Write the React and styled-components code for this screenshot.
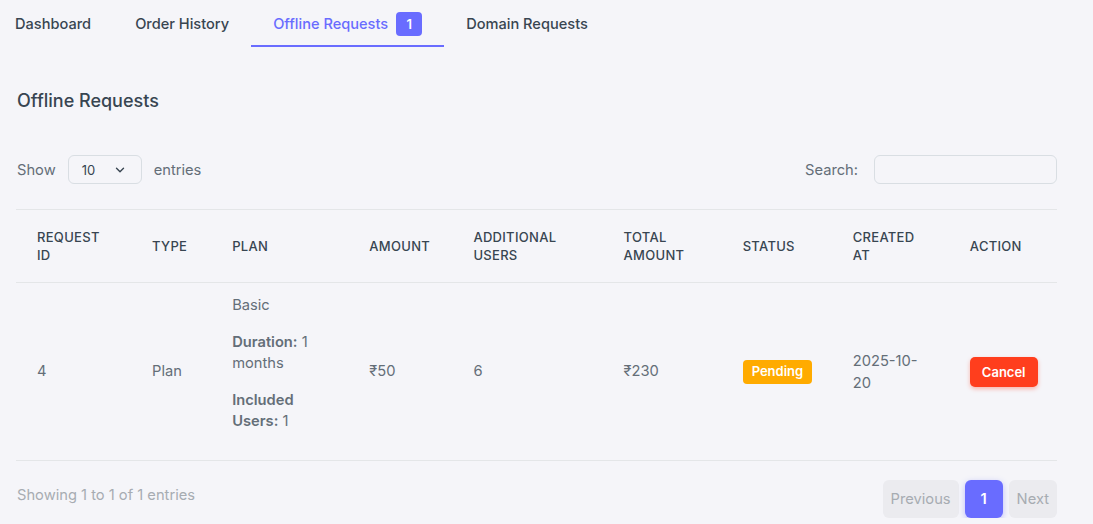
import React from "react";
import styled, { createGlobalStyle } from "styled-components";

const GlobalStyle = createGlobalStyle`
  body {
    margin: 0;
    background: #f5f5f9;
    font-family: Inter, "Noto Sans", "Liberation Sans", sans-serif;
    color: #646e78;
  }
`;

const Page = styled.div`
  padding: 0 36px 0 16px;
`;

const TabBar = styled.nav`
  display: flex;
  margin-left: -23px;
  height: 47px;
`;

const Tab = styled.a`
  display: flex;
  align-items: center;
  gap: 8px;
  box-sizing: border-box;
  height: 47px;
  padding: 3px 22px 0;
  font-size: 14.6px;
  font-weight: 500;
  color: ${(p) => (p.active ? "#696cff" : "#384551")};
  border-bottom: 2px solid ${(p) => (p.active ? "#696cff" : "transparent")};
  text-decoration: none;
  cursor: pointer;
`;

const TabBadge = styled.span`
  display: inline-flex;
  align-items: center;
  justify-content: center;
  width: 26px;
  height: 24px;
  border-radius: 4px;
  background: #696cff;
  color: #fff;
  font-size: 13px;
  font-weight: 600;
  margin-bottom: 1px;
`;

const Title = styled.h5`
  margin: 42px 0 0 1px;
  font-size: 18px;
  line-height: 24px;
  font-weight: 500;
  color: #384551;
`;

const Controls = styled.div`
  display: flex;
  justify-content: space-between;
  align-items: center;
  margin-top: 42px;
  font-size: 14.7px;
  color: #646e78;
`;

const Group = styled.label`
  display: flex;
  align-items: center;
  gap: ${(p) => p.gap || 12}px;
  margin-left: ${(p) => p.offset || 0}px;
`;

const Select = styled.div`
  display: flex;
  align-items: center;
  justify-content: space-between;
  box-sizing: border-box;
  width: 74px;
  height: 29px;
  padding: 0 14px 0 13px;
  border: 1px solid #d9dee3;
  border-radius: 6px;
  font-size: 13px;
  color: #384551;
`;

const SearchInput = styled.input`
  box-sizing: border-box;
  width: 183px;
  height: 29px;
  border: 1px solid #d9dee3;
  border-radius: 6px;
  background: transparent;
  outline: none;
`;

const Table = styled.table`
  width: 100%;
  margin-top: 25px;
  border-collapse: collapse;
  table-layout: fixed;
  border-top: 1px solid #e4e6e8;
`;

const Th = styled.th`
  padding: 18px 20px 18px 21px;
  text-align: left;
  font-size: 13px;
  line-height: 18px;
  font-weight: 500;
  letter-spacing: 0.3px;
  color: #384551;
  text-transform: uppercase;
  border-bottom: 1px solid #e4e6e8;
`;

const Td = styled.td`
  padding: 12px 20px 12px 21px;
  vertical-align: middle;
  font-size: 14.7px;
  line-height: 21px;
  color: #646e78;
  border-bottom: 1px solid #e4e6e8;
`;

const PlanLine = styled.p`
  margin: 0 0 16px;
  b {
    font-weight: 600;
  }
`;

const DateText = styled.span`
  display: block;
  line-height: 22px;
`;

const StatusBadge = styled.span`
  display: inline-flex;
  align-items: center;
  justify-content: center;
  height: 24px;
  padding: 0 9px;
  border-radius: 4px;
  background: #ffab00;
  color: #fff;
  font-size: 13px;
  font-weight: 600;
`;

const DangerButton = styled.button`
  height: 30px;
  padding: 0 12px;
  border: none;
  border-radius: 5px;
  background: #ff3e1d;
  color: #fff;
  font-family: inherit;
  font-size: 13px;
  font-weight: 600;
  box-shadow: 0 2px 4px rgba(255, 62, 29, 0.35);
  cursor: pointer;
`;

const Footer = styled.div`
  display: flex;
  justify-content: space-between;
  align-items: flex-start;
  margin-top: 19px;
`;

const Info = styled.div`
  padding-top: 5px;
  font-size: 14.7px;
  line-height: 21px;
  color: #a7acb2;
  margin-left: 1px;
`;

const Pager = styled.div`
  display: flex;
  gap: 6px;
`;

const PageBtn = styled.button`
  height: 38px;
  min-width: 38px;
  padding: 0 ${(p) => (p.active ? 0 : 8)}px;
  border: none;
  border-radius: 6px;
  font-family: inherit;
  font-size: 14.7px;
  background: ${(p) => (p.active ? "#696cff" : "#ebebef")};
  color: ${(p) => (p.active ? "#fff" : "#a7acb2")};
  font-weight: ${(p) => (p.active ? 600 : 400)};
  box-shadow: ${(p) => (p.active ? "0 2px 6px rgba(105, 108, 255, 0.4)" : "none")};
`;

const columns = [
  { label: "Request ID", width: 115 },
  { label: "Type", width: 80 },
  { label: "Plan", width: 137 },
  { label: "Amount", width: 104 },
  { label: "Additional Users", width: 150 },
  { label: "Total Amount", width: 119 },
  { label: "Status", width: 110 },
  { label: "Created At", width: 117 },
  { label: "Action", width: 108 }
];

const Chevron = () => (
  <svg width="14" height="14" viewBox="0 0 24 24" fill="none" stroke="#384551" strokeWidth="2.4" strokeLinecap="round" strokeLinejoin="round">
    <path d="M6 9l6 6 6-6" />
  </svg>
);

const App = () => (
  <Page>
    <GlobalStyle />
    <TabBar>
      <Tab>Dashboard</Tab>
      <Tab>Order History</Tab>
      <Tab active>
        Offline Requests <TabBadge>1</TabBadge>
      </Tab>
      <Tab>Domain Requests</Tab>
    </TabBar>

    <Title>Offline Requests</Title>

    <Controls>
      <Group offset={1}>
        Show
        <Select>
          10 <Chevron />
        </Select>
        entries
      </Group>
      <Group gap={16}>
        Search:
        <SearchInput />
      </Group>
    </Controls>

    <Table>
      <colgroup>
        {columns.map((c) => (
          <col key={c.label} style={{ width: c.width }} />
        ))}
      </colgroup>
      <thead>
        <tr>
          {columns.map((c) => (
            <Th key={c.label}>{c.label}</Th>
          ))}
        </tr>
      </thead>
      <tbody>
        <tr>
          <Td>4</Td>
          <Td>Plan</Td>
          <Td>
            <PlanLine>Basic</PlanLine>
            <PlanLine>
              <b>Duration:</b> 1 months
            </PlanLine>
            <PlanLine>
              <b>Included Users:</b> 1
            </PlanLine>
          </Td>
          <Td>₹50</Td>
          <Td>6</Td>
          <Td>₹230</Td>
          <Td>
            <StatusBadge>Pending</StatusBadge>
          </Td>
          <Td>
            <DateText>2025-10-20</DateText>
          </Td>
          <Td>
            <DangerButton>Cancel</DangerButton>
          </Td>
        </tr>
      </tbody>
    </Table>

    <Footer>
      <Info>Showing 1 to 1 of 1 entries</Info>
      <Pager>
        <PageBtn>Previous</PageBtn>
        <PageBtn active>1</PageBtn>
        <PageBtn>Next</PageBtn>
      </Pager>
    </Footer>
  </Page>
);

export default App;
